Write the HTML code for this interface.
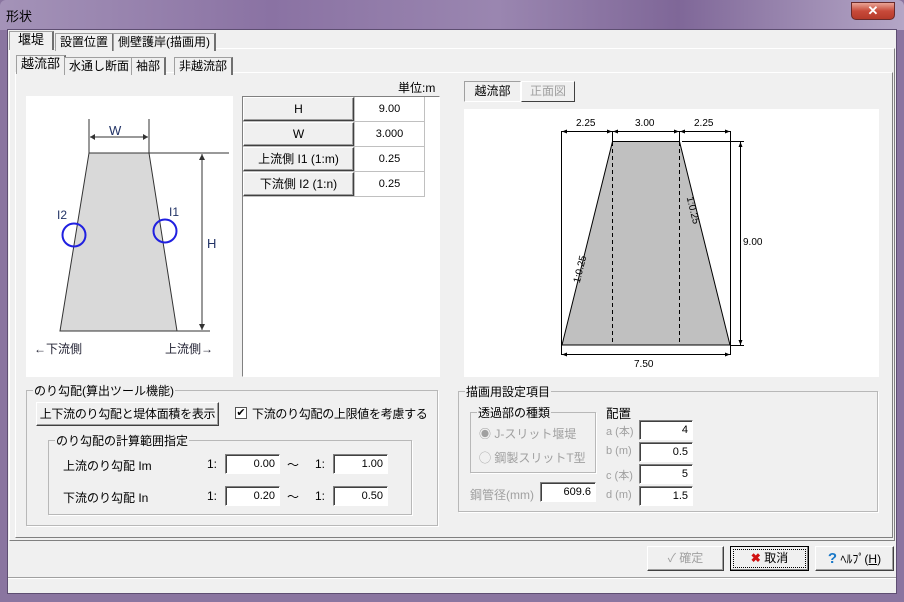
<!DOCTYPE html>
<html><head><meta charset="utf-8"><style>
*{margin:0;padding:0;box-sizing:border-box}
body{width:904px;height:602px;overflow:hidden;font-family:"Liberation Sans","Noto Sans CJK JP",sans-serif;font-size:12px;color:#000;background:#8a75a0;position:relative}
.a{position:absolute}
.title{left:0;top:0;width:904px;height:30px;background:linear-gradient(90deg,#a493b8,#8a72a3 30%,#9a86b0 55%,#7f6798 75%,#b4a6c6);border-radius:6px 6px 0 0}
.client{left:7px;top:29px;width:890px;height:565px;background:#f0f0f0;border:1px solid #5e4e72}
.tab{position:absolute;height:18px;border:1px solid #a0a0a0;border-bottom:none;background:#f0f0f0;font-size:12px;line-height:16px;padding:0 4px;border-right:2px solid #707070}
.sunk{border:1px solid;border-color:#a0a0a0 #fff #fff #a0a0a0}
.rais{border:1px solid;border-color:#fff #a0a0a0 #a0a0a0 #fff}
.grp{position:absolute;border:1px solid #b8b8b8;box-shadow:1px 1px 0 #fff}
.grp>span{position:absolute;top:-9px;left:6px;background:#f0f0f0;padding:0 1px;font-size:12px}
.cell{position:absolute;font-size:11px;text-align:center;line-height:24px}
.inp{position:absolute;background:#fff;border:1px solid;border-color:#808080 #fff #fff #808080;box-shadow:inset 1px 1px 0 #404040;text-align:right;padding-right:4px;font-size:11px;line-height:18px;height:20px}
.btn{position:absolute;border:1px solid;border-color:#fff #404040 #404040 #fff;box-shadow:inset -1px -1px 0 #a0a0a0;background:#f0f0f0;text-align:center;font-size:12px}
.g{color:#a0a0a0}
</style></head><body>
<div class="a title"></div>
<div class="a" style="left:6px;top:6px;font-size:13px">形状</div>
<div class="a" style="left:851px;top:2px;width:44px;height:18px;background:linear-gradient(#e9a496,#c84a3a 50%,#b53a2a);border:1px solid #6a2a2a;border-radius:0 0 5px 5px;color:#fff;text-align:center;font-weight:bold;font-size:13px;line-height:16px">✕</div>
<div class="a client"></div>
<div class="a" style="left:9px;top:48px;width:886px;height:493px;border:1px solid;border-color:#fff #808080 #808080 #fff"></div>
<div class="tab" style="left:9px;top:31px;height:19px;font-size:13px;padding:0 8px">堰堤</div>
<div class="tab" style="left:55px;top:33px;">設置位置</div>
<div class="tab" style="left:113px;top:33px;">側壁護岸(描画用)</div>
<div class="a" style="left:15px;top:72px;width:878px;height:466px;border:1px solid;border-color:#fff #808080 #808080 #fff"></div>
<div class="tab" style="left:16px;top:55px;height:19px;font-size:13px">越流部</div>
<div class="tab" style="left:64px;top:57px">水通し断面</div>
<div class="tab" style="left:131px;top:57px">袖部</div>
<div class="tab" style="left:174px;top:57px">非越流部</div>
<div class="a" style="left:398px;top:79px;font-size:12px">単位:m</div>
<svg class="a" style="left:26px;top:96px" width="207" height="281" viewBox="26 96 207 281">
<rect x="26" y="96" width="207" height="281" fill="#fff"/>
<polygon points="89,153 149,153 177,331 60,331" fill="#d9d9d9" stroke="#333" stroke-width="1"/>
<line x1="89" y1="119" x2="89" y2="153" stroke="#333"/><line x1="149" y1="119" x2="149" y2="153" stroke="#333"/>
<line x1="90" y1="137" x2="148" y2="137" stroke="#333"/>
<path d="M90 137l5-3v6zM148 137l-5-3v6z" fill="#333"/>
<line x1="149" y1="153" x2="229" y2="153" stroke="#333"/>
<line x1="177" y1="331" x2="210" y2="331" stroke="#333"/>
<line x1="202" y1="154" x2="202" y2="330" stroke="#333"/>
<path d="M202 154l-3 6h6zM202 330l-3-6h6z" fill="#333"/>
<circle cx="74" cy="235" r="11.5" fill="none" stroke="#2020e0" stroke-width="2"/>
<circle cx="165" cy="231" r="11.5" fill="none" stroke="#2020e0" stroke-width="2"/>
<text x="109" y="135" font-size="13" fill="#223366" font-family="Liberation Sans">W</text>
<text x="207" y="248" font-size="13" fill="#223366" font-family="Liberation Sans">H</text>
<text x="57" y="219" font-size="12" fill="#223366" font-family="Liberation Sans">I2</text>
<text x="169" y="216" font-size="12" fill="#223366" font-family="Liberation Sans">I1</text>
<text x="34" y="353" font-size="12" fill="#223">←下流側</text>
<text x="165" y="353" font-size="12" fill="#223">上流側→</text>
</svg>
<div class="a" style="left:242px;top:96px;width:198px;height:281px;background:#fff;border:1px solid;border-color:#808080 #fff #fff #808080"></div>
<div class="a" style="left:243px;top:97px;width:182px;height:100px;background:#c0c0c0"></div>
<div class="btn cell" style="left:243px;top:97px;width:111px;height:24px;line-height:22px">H</div>
<div class="btn cell" style="left:243px;top:122px;width:111px;height:24px;line-height:22px">W</div>
<div class="btn cell" style="left:243px;top:147px;width:111px;height:24px;line-height:22px">上流側 I1 (1:m)</div>
<div class="btn cell" style="left:243px;top:172px;width:111px;height:24px;line-height:22px">下流側 I2 (1:n)</div>
<div class="cell" style="left:355px;top:97px;width:69px;height:24px;background:#fff">9.00</div>
<div class="cell" style="left:355px;top:122px;width:69px;height:24px;background:#fff">3.000</div>
<div class="cell" style="left:355px;top:147px;width:69px;height:24px;background:#fff">0.25</div>
<div class="cell" style="left:355px;top:172px;width:69px;height:24px;background:#fff">0.25</div>
<div class="grp" style="left:26px;top:390px;width:412px;height:136px"><span>のり勾配(算出ツール機能)</span></div>
<div class="btn" style="left:36px;top:402px;width:183px;height:24px;line-height:22px;font-size:12px;letter-spacing:-0.3px;white-space:nowrap">上下流のり勾配と堤体面積を表示</div>
<div class="a" style="left:235px;top:407px;width:12px;height:12px;background:#fff;border:1px solid #555;font-size:11px;line-height:10px;text-align:center">✔</div>
<div class="a" style="left:252px;top:405px;font-size:12px;letter-spacing:-0.3px;white-space:nowrap">下流のり勾配の上限値を考慮する</div>
<div class="grp" style="left:48px;top:440px;width:364px;height:75px"><span>のり勾配の計算範囲指定</span></div>
<div class="a" style="left:63px;top:457px">上流のり勾配 Im</div>
<div class="a" style="left:63px;top:489px">下流のり勾配 In</div>
<div class="a" style="left:207px;top:457px">1:</div><div class="a" style="left:315px;top:457px">1:</div>
<div class="a" style="left:207px;top:489px">1:</div><div class="a" style="left:315px;top:489px">1:</div>
<div class="a" style="left:287px;top:456px">～</div><div class="a" style="left:287px;top:488px">～</div>
<div class="inp" style="left:225px;top:454px;width:55px">0.00</div>
<div class="inp" style="left:333px;top:454px;width:55px">1.00</div>
<div class="inp" style="left:225px;top:486px;width:55px">0.20</div>
<div class="inp" style="left:333px;top:486px;width:55px">0.50</div>
<div class="a sunk" style="left:464px;top:81px;width:57px;height:21px;background:#f0f0f0;text-align:center;line-height:19px">越流部</div>
<div class="a rais g" style="left:521px;top:81px;width:54px;height:21px;border-right-color:#404040;border-bottom-color:#404040;text-align:center;line-height:19px">正面図</div>
<svg class="a" style="left:464px;top:109px" width="415" height="268" viewBox="464 109 415 268">
<rect x="464" y="109" width="415" height="268" fill="#fff"/>
<polygon points="612.5,141.5 679.5,141.5 730,345 562,345" fill="#c0c0c0" stroke="#000"/>
<line x1="612.5" y1="142" x2="612.5" y2="344" stroke="#000" stroke-dasharray="4,3"/>
<line x1="679.5" y1="142" x2="679.5" y2="344" stroke="#000" stroke-dasharray="4,3"/>
<g stroke="#000" fill="none">
<line x1="561.5" y1="131" x2="561.5" y2="355"/><line x1="730.5" y1="131" x2="730.5" y2="355"/>
<line x1="612.5" y1="131" x2="612.5" y2="141"/><line x1="679.5" y1="131" x2="679.5" y2="141"/>
<line x1="562" y1="131.5" x2="730" y2="131.5"/>
<line x1="562" y1="354.5" x2="730" y2="354.5"/>
<line x1="682" y1="141.5" x2="744" y2="141.5"/><line x1="730" y1="345.5" x2="744" y2="345.5"/>
<line x1="740.5" y1="142" x2="740.5" y2="345"/>
</g>
<g fill="#000">
<path d="M562 131.5l5-2v4zM612 131.5l-5-2v4zM613 131.5l5-2v4zM679 131.5l-5-2v4zM680 131.5l5-2v4zM730 131.5l-5-2v4zM562 354.5l5-2v4zM730 354.5l-5-2v4zM740.5 142l-2 5h4zM740.5 345l-2-5h4z"/>
</g>
<g font-family="Liberation Sans" font-size="10" fill="#000">
<text x="576" y="126">2.25</text><text x="635" y="126">3.00</text><text x="694" y="126">2.25</text>
<text x="743" y="245">9.00</text><text x="634" y="367">7.50</text>
<text transform="translate(583,270) rotate(-76)" text-anchor="middle">1:0.25</text>
<text transform="translate(690,211) rotate(76)" text-anchor="middle">1:0.25</text>
</g>
</svg>
<div class="grp" style="left:458px;top:391px;width:420px;height:121px"><span>描画用設定項目</span></div>
<div class="grp" style="left:470px;top:412px;width:126px;height:61px"><span>透過部の種類</span></div>
<div class="a g" style="left:479px;top:425px">◉ J-スリット堰堤</div>
<div class="a g" style="left:479px;top:449px">◯ 鋼製スリットT型</div>
<div class="a" style="left:606px;top:403px;font-size:12.5px">配置</div>
<div class="a g" style="left:606px;top:423px;font-size:11px">a (本)</div>
<div class="a g" style="left:606px;top:445px;font-size:11px">b (m)</div>
<div class="a g" style="left:606px;top:467px;font-size:11px">c (本)</div>
<div class="a g" style="left:606px;top:489px;font-size:11px">d (m)</div>
<div class="inp" style="left:639px;top:420px;width:54px">4</div>
<div class="inp" style="left:639px;top:442px;width:54px">0.5</div>
<div class="inp" style="left:639px;top:464px;width:54px">5</div>
<div class="inp" style="left:639px;top:486px;width:54px">1.5</div>
<div class="a g" style="left:470px;top:486px">鋼管径(mm)</div>
<div class="inp" style="left:540px;top:482px;width:56px">609.6</div>
<div class="btn g" style="left:647px;top:546px;width:77px;height:25px;line-height:23px">✓ 確定</div>
<div class="btn" style="left:730px;top:546px;width:79px;height:25px;line-height:21px;border:1px solid #000;box-shadow:inset -1px -1px 0 #808080"><div style="margin:2px;border:1px dotted #000;height:19px;line-height:17px"><b style="color:#d01010">✖</b> 取消</div></div>
<div class="btn" style="left:815px;top:546px;width:79px;height:25px;line-height:23px"><b style="color:#1878c8;font-size:15px">?</b> ﾍﾙﾌﾟ(<u>H</u>)</div>
<div class="a" style="left:8px;top:577px;width:888px;height:15px;border-top:1px solid #a0a0a0;box-shadow:inset 0 1px 0 #fff"></div>
</body></html>
